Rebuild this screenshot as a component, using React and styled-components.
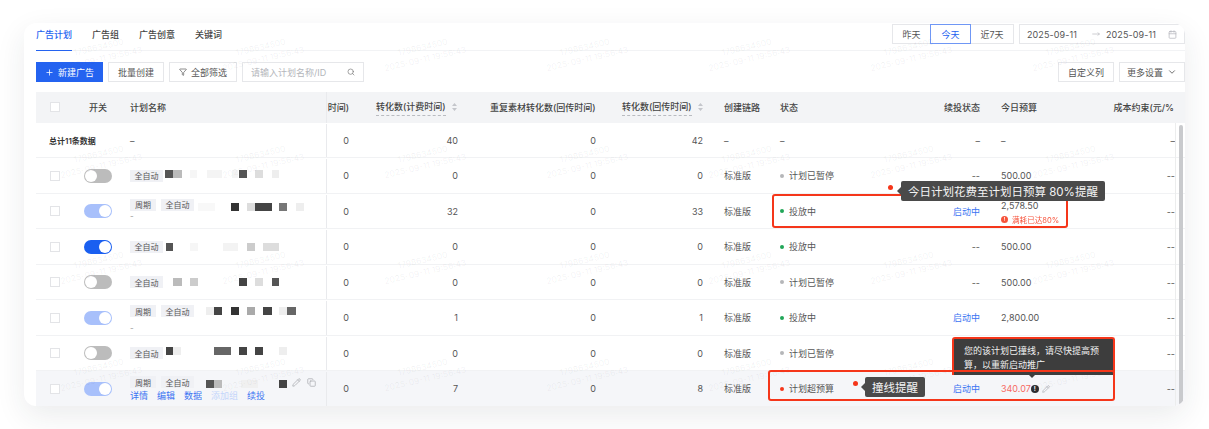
import React from "react";
import styled, { createGlobalStyle, css } from "styled-components";
import { Plus, Search, ChevronDown, Calendar, MoveRight, Filter, Pencil, Copy } from "lucide-react";

const GlobalStyle = createGlobalStyle`
	html, body {
		margin: 0;
		background: #fff;
	}
	body {
		font-family: Inter, "Noto Sans CJK SC", "Liberation Sans", sans-serif;
		font-size: 9px;
		color: #555;
	}
`;

const BLUE = "#2463f0";
const RED = "#f5361a";
const COLUMNS = "40px 44px 207px 29px 112px 138px 107px 57px 130px 90px 110px 85px";

const Page = styled.div`
	padding: 23px 24px 0;
	height: 429px;
	box-sizing: border-box;
	overflow: hidden;
`;

const Card = styled.div`
	position: relative;
	height: 383px;
	background: #fff;
	border-radius: 12px;
	overflow: hidden;
	box-shadow: 0 10px 30px rgba(30, 40, 60, 0.09);
`;

const TopBar = styled.div`
	display: flex;
	justify-content: space-between;
	height: 28px;
	margin-left: 12px;
	box-sizing: border-box;
	border-bottom: 1px solid #f2f3f5;
`;

const Tabs = styled.div`
	display: flex;
	gap: 20px;
`;

const Tab = styled.div`
	height: 28px;
	box-sizing: border-box;
	padding-top: 5px;
	line-height: 13px;
	color: ${({ $active }) => ($active ? BLUE : "#444")};
	border-bottom: ${({ $active }) => ($active ? `1.5px solid ${BLUE}` : "none")};
	font-weight: 500;
`;

const DateControls = styled.div`
	display: flex;
	gap: 5px;
	height: 20px;
	margin-top: 1px;
`;

const RangeGroup = styled.div`
	display: flex;
`;

const RangeButton = styled.div`
	display: flex;
	align-items: center;
	justify-content: center;
	width: ${({ $w }) => $w}px;
	box-sizing: border-box;
	border: 1px solid ${({ $active }) => ($active ? "#6f97f5" : "#e6e7ea")};
	color: ${({ $active }) => ($active ? BLUE : "#555")};
	margin-left: ${({ $first }) => ($first ? 0 : -1)}px;
	position: ${({ $active }) => ($active ? "relative" : "static")};
	background: #fff;
`;

const DatePicker = styled.div`
	display: flex;
	align-items: center;
	width: 166px;
	box-sizing: border-box;
	padding: 0 7px 0 7px;
	border: 1px solid #e6e7ea;
	color: #555;
	letter-spacing: 0.1px;
	svg {
		color: #b5b7bd;
	}
`;

const DateArrow = styled(MoveRight)`
	margin: 0 6px 0 15px;
`;

const DateEnd = styled(Calendar)`
	margin-left: auto;
`;

const Toolbar = styled.div`
	display: flex;
	gap: 5px;
	height: 20px;
	margin: 11px 0 10px 12px;
`;

const ToolButton = styled.div`
	display: flex;
	align-items: center;
	justify-content: center;
	gap: 4px;
	width: ${({ $w }) => $w}px;
	box-sizing: border-box;
	border: 1px solid ${({ $primary }) => ($primary ? BLUE : "#e6e7ea")};
	background: ${({ $primary }) => ($primary ? BLUE : "#fff")};
	color: ${({ $primary }) => ($primary ? "#fff" : "#555")};
`;

const SearchBox = styled.div`
	display: flex;
	align-items: center;
	justify-content: space-between;
	width: 122px;
	box-sizing: border-box;
	padding: 0 8px 0 8px;
	border: 1px solid #e6e7ea;
	color: #b4b6bb;
	svg {
		color: #777;
	}
`;

const Spacer = styled.div`
	flex: 1;
`;

const Table = styled.div`
	margin-left: 12px;
`;

const HeaderRow = styled.div`
	display: grid;
	grid-template-columns: ${COLUMNS};
	height: 30.5px;
	background: #f3f4f6;
	color: #444;
	font-weight: 500;
`;

const Row = styled.div`
	display: grid;
	grid-template-columns: ${COLUMNS};
	height: 35.5px;
	box-sizing: border-box;
	padding-top: 1px;
	border-bottom: 1px solid #f1f2f4;
	background: ${({ $hover }) => ($hover ? "#f5f6f9" : "transparent")};
`;

const Cell = styled.div`
	display: flex;
	align-items: center;
	min-width: 0;
	white-space: nowrap;
	padding-left: ${({ $pl }) => $pl || 0}px;
	padding-right: ${({ $pr }) => $pr || 0}px;
	${({ $right }) =>
		$right &&
		css`
			justify-content: flex-end;
		`}
	${({ $center }) =>
		$center &&
		css`
			justify-content: center;
		`}
	${({ $divider }) =>
		$divider &&
		css`
			border-right: 1px solid #e9eaed;
		`}
`;

const HeaderLabel = styled.span`
	border-bottom: ${({ $dashed }) => ($dashed ? "1px dashed #b9bbc0" : "none")};
	padding: 2px 0;
`;

const SortIcon = styled.svg`
	width: 5px;
	height: 8px;
	margin-left: 6px;
	color: #c4c6cb;
`;

const Checkbox = styled.div`
	width: 10px;
	height: 10px;
	box-sizing: border-box;
	margin-left: 14px;
	border: 1px solid #e3e4e7;
	background: #fff;
`;

const Switch = styled.div`
	display: flex;
	align-items: center;
	justify-content: ${({ $on }) => ($on ? "flex-end" : "flex-start")};
	width: 28px;
	height: 14px;
	padding: 1px;
	box-sizing: border-box;
	border-radius: 7px;
	background: ${({ $on, $soft }) => (!$on ? "#bcbcbc" : $soft ? "#a8c0fb" : "#1a5ff0")};
	&::after {
		content: "";
		width: 12px;
		height: 12px;
		border-radius: 50%;
		background: #fff;
	}
`;

const TotalLabel = styled.span`
	color: #333;
	font-size: 8px;
	font-weight: 600;
`;

const NameCell = styled.div`
	display: flex;
	flex-direction: column;
	justify-content: ${({ $stacked }) => ($stacked ? "flex-start" : "center")};
	padding-top: ${({ $stacked }) => ($stacked ? 4 : 0)}px;
	padding-left: 10px;
	border-right: 1px solid #e9eaed;
	min-width: 0;
`;

const NameLine = styled.div`
	display: flex;
	align-items: center;
	height: 12px;
`;

const Tag = styled.span`
	display: flex;
	align-items: center;
	justify-content: center;
	width: ${({ $w }) => $w}px;
	height: 12px;
	background: #f0f1f5;
	color: #555;
	font-size: 8px;
	flex: none;
	& + & {
		margin-left: 5px;
	}
`;

const Mosaic = styled.span`
	flex: none;
	align-self: ${({ $align }) => $align || "center"};
	width: ${({ $w }) => $w}px;
	height: 8px;
	margin-left: ${({ $gap }) => $gap}px;
	background: ${({ $tone }) => $tone};
	filter: blur(0.5px);
`;

const SubName = styled.div`
	height: 6px;
	line-height: 6px;
	margin-top: ${({ $gap }) => $gap}px;
	color: #999;
	font-size: 8px;
`;

const ActionLine = styled.div`
	display: flex;
	gap: 9px;
	height: 12px;
	line-height: 12px;
	margin-top: 2px;
`;

const ActionLink = styled.span`
	color: ${({ $disabled }) => ($disabled ? "#c4d5fb" : "#3b74f2")};
`;

const RowIcon = styled.span`
	display: flex;
	margin-left: ${({ $gap }) => $gap}px;
	color: #a9abb0;
`;

const StatusDot = styled.i`
	width: 4px;
	height: 4px;
	border-radius: 50%;
	margin-right: 5px;
	background: ${({ $color }) => $color};
`;

const ResumeLink = styled.span`
	color: #3b74f2;
`;

const BudgetStack = styled.div`
	display: flex;
	flex-direction: column;
	gap: 3px;
	margin-top: 3px;
`;

const BudgetAlert = styled.div`
	display: flex;
	align-items: center;
	gap: 4px;
	color: ${RED};
	font-size: 7.6px;
	opacity: 0.85;
`;

const AlertDot = styled.span`
	display: inline-flex;
	align-items: center;
	justify-content: center;
	width: ${({ $size }) => $size}px;
	height: ${({ $size }) => $size}px;
	border-radius: 50%;
	background: ${({ $color }) => $color};
	color: #fff;
	font-size: ${({ $size }) => $size - 2}px;
	font-weight: 700;
	line-height: 1;
`;

const OverBudget = styled.span`
	color: #f76a63;
`;

const WatermarkLayer = styled.div`
	position: absolute;
	left: -5px;
	top: -23px;
	display: grid;
	grid-template-columns: repeat(7, 162px);
	grid-auto-rows: 106.5px;
	pointer-events: none;
`;

const WatermarkTile = styled.div`
	display: flex;
	flex-direction: column;
	align-items: center;
	justify-content: center;
	transform: rotate(-13deg);
	color: rgba(60, 60, 70, 0.07);
	font-size: 8.5px;
	line-height: 12px;
	white-space: nowrap;
`;

const ScrollTrack = styled.div`
	position: absolute;
	right: 2px;
	top: 102px;
	width: 4px;
	height: 280px;
	border-radius: 2px;
	background: #c9cacd;
`;

const ScrollEdge = styled.div`
	position: absolute;
	right: 9px;
	top: 100px;
	bottom: 0;
	width: 1px;
	background: #eceded;
`;

/* red marks and hints drawn over the table */
const Frame = styled.div`
	position: absolute;
	left: ${({ $x }) => $x}px;
	top: ${({ $y }) => $y}px;
	width: ${({ $w }) => $w}px;
	height: ${({ $h }) => $h}px;
	box-sizing: border-box;
	border: 2px solid ${RED};
	border-radius: 3px;
`;

const Pin = styled.i`
	position: absolute;
	left: ${({ $x }) => $x}px;
	top: ${({ $y }) => $y}px;
	width: 5px;
	height: 5px;
	border-radius: 50%;
	background: ${RED};
`;

const Hint = styled.div`
	position: absolute;
	left: ${({ $x }) => $x}px;
	top: ${({ $y }) => $y}px;
	height: 20px;
	padding: 0 7px;
	display: flex;
	align-items: center;
	border-radius: 2px;
	background: #4a4a4a;
	color: #f4f4f4;
	font-size: 11.5px;
	white-space: nowrap;
	&::before {
		content: "";
		position: absolute;
		left: -4px;
		top: 6px;
		border-style: solid;
		border-width: 4px 4px 4px 0;
		border-color: transparent #4a4a4a transparent transparent;
	}
`;

const BudgetHint = styled.div`
	position: absolute;
	left: 928px;
	top: 314px;
	width: 163px;
	height: 38px;
	box-sizing: border-box;
	padding: 5px 9px 0 10px;
	background: #3d3d3d;
	border: 2px solid ${RED};
	border-bottom: none;
	border-radius: 3px 3px 0 0;
	color: #f0f0f0;
	font-size: 9px;
	line-height: 14px;
	&::after {
		content: "";
		position: absolute;
		left: 75px;
		bottom: -3px;
		border-style: solid;
		border-width: 3px 3px 0 3px;
		border-color: #3d3d3d transparent transparent transparent;
	}
`;

const WARN = { paused: ["计划已暂停", "#b5b6b9"], live: ["投放中", "#21a658"], over: ["计划超预算", RED] };

const rows = [
	{
		tags: ["全自动"],
		mosaicAlign: "flex-start",
		mosaic: [[2, 8, "#555"], [0, 9, "#bbb"], [8, 7, "#f6f6f6"], [10, 15, "#f4f4f4"], [10, 6, "#f4f4f4"], [1, 8, "#555"], [8, 8, "#ddd"], [9, 7, "#eee"]],
		on: false,
		conv: 0,
		conv2: 0,
		status: "paused",
		budget: "500.00",
	},
	{
		tags: ["周期", "全自动"],
		mosaicAlign: "flex-end",
		mosaic: [[4, 17, "#f8f8f8"], [16, 8, "#333"], [8, 8, "#ddd"], [0, 17, "#444"], [7, 8, "#777"], [9, 8, "#eee"]],
		sub: "-",
		subGap: 2,
		on: true,
		soft: true,
		conv: 32,
		conv2: 33,
		status: "live",
		resume: true,
		budget: "2,578.50",
		alert: true,
	},
	{
		tags: ["全自动"],
		mosaic: [[3, 7, "#555"], [17, 8, "#f6f6f6"], [25, 15, "#f3f3f3"], [9, 8, "#ccc"], [8, 16, "#ddd"]],
		on: true,
		conv: 0,
		conv2: 0,
		status: "live",
		budget: "500.00",
	},
	{
		tags: ["全自动"],
		mosaic: [[10, 9, "#bbb"], [8, 8, "#ccc"], [41, 8, "#444"], [8, 8, "#ddd"], [9, 7, "#555"]],
		on: false,
		conv: 0,
		conv2: 0,
		status: "paused",
		budget: "500.00",
	},
	{
		tags: ["周期", "全自动"],
		mosaic: [[12, 8, "#eee"], [0, 8, "#444"], [9, 8, "#333"], [8, 8, "#aaa"], [8, 9, "#444"], [7, 8, "#eee"], [0, 9, "#666"]],
		sub: "-",
		subGap: 8,
		on: true,
		soft: true,
		conv: 1,
		conv2: 1,
		status: "live",
		resume: true,
		budget: "2,800.00",
	},
	{
		tags: ["全自动"],
		mosaicAlign: "flex-start",
		mosaic: [[3, 7, "#444"], [0, 8, "#eee"], [33, 17, "#666"], [8, 8, "#444"], [8, 8, "#444"], [16, 8, "#eee"]],
		on: false,
		conv: 0,
		conv2: 0,
		status: "paused",
		budget: "500.00",
	},
	{
		tags: ["周期", "全自动"],
		mosaicAlign: "flex-end",
		mosaic: [[12, 8, "#555"], [0, 8, "#bbb"], [19, 17, "#f0f0f0"], [21, 8, "#444"]],
		on: true,
		soft: true,
		conv: 7,
		conv2: 8,
		status: "over",
		resume: true,
		budget: "340.07",
		over: true,
		hover: true,
	},
];

function SortArrows() {
	return (
		<SortIcon viewBox="0 0 5 8" fill="currentColor">
			<path d="M2.5 0 5 3H0zM2.5 8 0 5h5z" />
		</SortIcon>
	);
}

function Watermarks() {
	return (
		<WatermarkLayer>
			{Array.from({ length: 28 }, (_, i) => (
				<WatermarkTile key={i}>
					<span>1798634500</span>
					<span>2025-09-11 19:56:43</span>
				</WatermarkTile>
			))}
		</WatermarkLayer>
	);
}

function PlanName({ row }) {
	return (
		<NameCell $stacked={row.tags.length > 1}>
			<NameLine>
				{row.tags.map((tag) => (
					<Tag key={tag} $w={tag === "周期" ? 26 : 33}>
						{tag}
					</Tag>
				))}
				{row.mosaic.map(([gap, w, tone], i) => (
					<Mosaic key={i} $gap={gap} $w={w} $tone={tone} $align={row.mosaicAlign} />
				))}
				{row.hover && (
					<>
						<RowIcon $gap={5}>
							<Pencil size={9} />
						</RowIcon>
						<RowIcon $gap={6}>
							<Copy size={9} />
						</RowIcon>
					</>
				)}
			</NameLine>
			{row.sub && <SubName $gap={row.subGap}>{row.sub}</SubName>}
			{row.hover && (
				<ActionLine>
					<ActionLink>详情</ActionLink>
					<ActionLink>编辑</ActionLink>
					<ActionLink>数据</ActionLink>
					<ActionLink $disabled>添加组</ActionLink>
					<ActionLink>续投</ActionLink>
				</ActionLine>
			)}
		</NameCell>
	);
}

function PlanRow({ row }) {
	const [label, color] = WARN[row.status];
	return (
		<Row $hover={row.hover}>
			<Cell>
				<Checkbox />
			</Cell>
			<Cell $center>
				<Switch $on={row.on} $soft={row.soft} />
			</Cell>
			<PlanName row={row} />
			<Cell $right $pr={7}>0</Cell>
			<Cell $right $pr={10}>{row.conv}</Cell>
			<Cell $right $pr={10}>0</Cell>
			<Cell $right $pr={10}>{row.conv2}</Cell>
			<Cell $pl={11}>标准版</Cell>
			<Cell $pl={10}>
				<StatusDot $color={color} />
				{label}
			</Cell>
			<Cell $right $pr={10}>
				{row.resume ? <ResumeLink>启动中</ResumeLink> : "--"}
			</Cell>
			<Cell $pl={11}>
				{row.alert ? (
					<BudgetStack>
						<span>{row.budget}</span>
						<BudgetAlert>
							<AlertDot $size={7} $color={RED}>!</AlertDot>
							满耗已达80%
						</BudgetAlert>
					</BudgetStack>
				) : row.over ? (
					<>
						<OverBudget>{row.budget}</OverBudget>
						<RowIcon $gap={0}>
							<AlertDot $size={8} $color="#2c2c30">!</AlertDot>
						</RowIcon>
						<RowIcon $gap={3}>
							<Pencil size={8} />
						</RowIcon>
					</>
				) : (
					row.budget
				)}
			</Cell>
			<Cell $right $pr={10}>--</Cell>
		</Row>
	);
}

export default function App() {
	return (
		<Page>
			<GlobalStyle />
			<Card>
				<TopBar>
					<Tabs>
						<Tab $active>广告计划</Tab>
						<Tab>广告组</Tab>
						<Tab>广告创意</Tab>
						<Tab>关键词</Tab>
					</Tabs>
					<DateControls>
						<RangeGroup>
							<RangeButton $w={39} $first>昨天</RangeButton>
							<RangeButton $w={41} $active>今天</RangeButton>
							<RangeButton $w={44}>近7天</RangeButton>
						</RangeGroup>
						<DatePicker>
							2025-09-11
							<DateArrow size={8} />
							2025-09-11
							<DateEnd size={9} />
						</DatePicker>
					</DateControls>
				</TopBar>
				<Toolbar>
					<ToolButton $w={67} $primary>
						<Plus size={9} />
						新建广告
					</ToolButton>
					<ToolButton $w={56}>批量创建</ToolButton>
					<ToolButton $w={68}>
						<Filter size={8} />
						全部筛选
					</ToolButton>
					<SearchBox>
						请输入计划名称/ID
						<Search size={8} />
					</SearchBox>
					<Spacer />
					<ToolButton $w={56}>自定义列</ToolButton>
					<ToolButton $w={66}>
						更多设置
						<ChevronDown size={10} />
					</ToolButton>
				</Toolbar>
				<Table>
					<HeaderRow>
						<Cell>
							<Checkbox />
						</Cell>
						<Cell $center>开关</Cell>
						<Cell $pl={10} $divider>计划名称</Cell>
						<Cell $right $pr={7}>时间)</Cell>
						<Cell $pl={20}>
							<HeaderLabel $dashed>转化数(计费时间)</HeaderLabel>
							<SortArrows />
						</Cell>
						<Cell $pl={22}>重复素材转化数(回传时间)</Cell>
						<Cell $pl={16}>
							<HeaderLabel $dashed>转化数(回传时间)</HeaderLabel>
							<SortArrows />
						</Cell>
						<Cell $pl={11}>创建链路</Cell>
						<Cell $pl={10}>状态</Cell>
						<Cell $right $pr={10}>续投状态</Cell>
						<Cell $pl={11}>今日预算</Cell>
						<Cell $right $pr={11}>成本约束(元/%</Cell>
					</HeaderRow>
					<Row>
						<Cell $pl={13}>
							<TotalLabel>总计11条数据</TotalLabel>
						</Cell>
						<Cell />
						<Cell $pl={10} $divider>–</Cell>
						<Cell $right $pr={7}>0</Cell>
						<Cell $right $pr={10}>40</Cell>
						<Cell $right $pr={10}>0</Cell>
						<Cell $right $pr={10}>42</Cell>
						<Cell $pl={11}>–</Cell>
						<Cell $pl={10}>–</Cell>
						<Cell $right $pr={10}>–</Cell>
						<Cell $pl={11}>–</Cell>
						<Cell $right $pr={10}>–</Cell>
					</Row>
					{rows.map((row, i) => (
						<PlanRow key={i} row={row} />
					))}
				</Table>
				<Watermarks />
				<ScrollEdge />
				<ScrollTrack />
				<Frame $x={748} $y={171} $w={296} $h={34} />
				<Pin $x={864} $y={162} />
				<Hint $x={877} $y={158}>今日计划花费至计划日预算 80%提醒</Hint>
				<BudgetHint>您的该计划已撞线，请尽快提高预算，以重新启动推广</BudgetHint>
				<Frame $x={744} $y={347} $w={347} $h={31} />
				<Pin $x={829} $y={358} />
				<Hint $x={841} $y={354}>撞线提醒</Hint>
			</Card>
		</Page>
	);
}
